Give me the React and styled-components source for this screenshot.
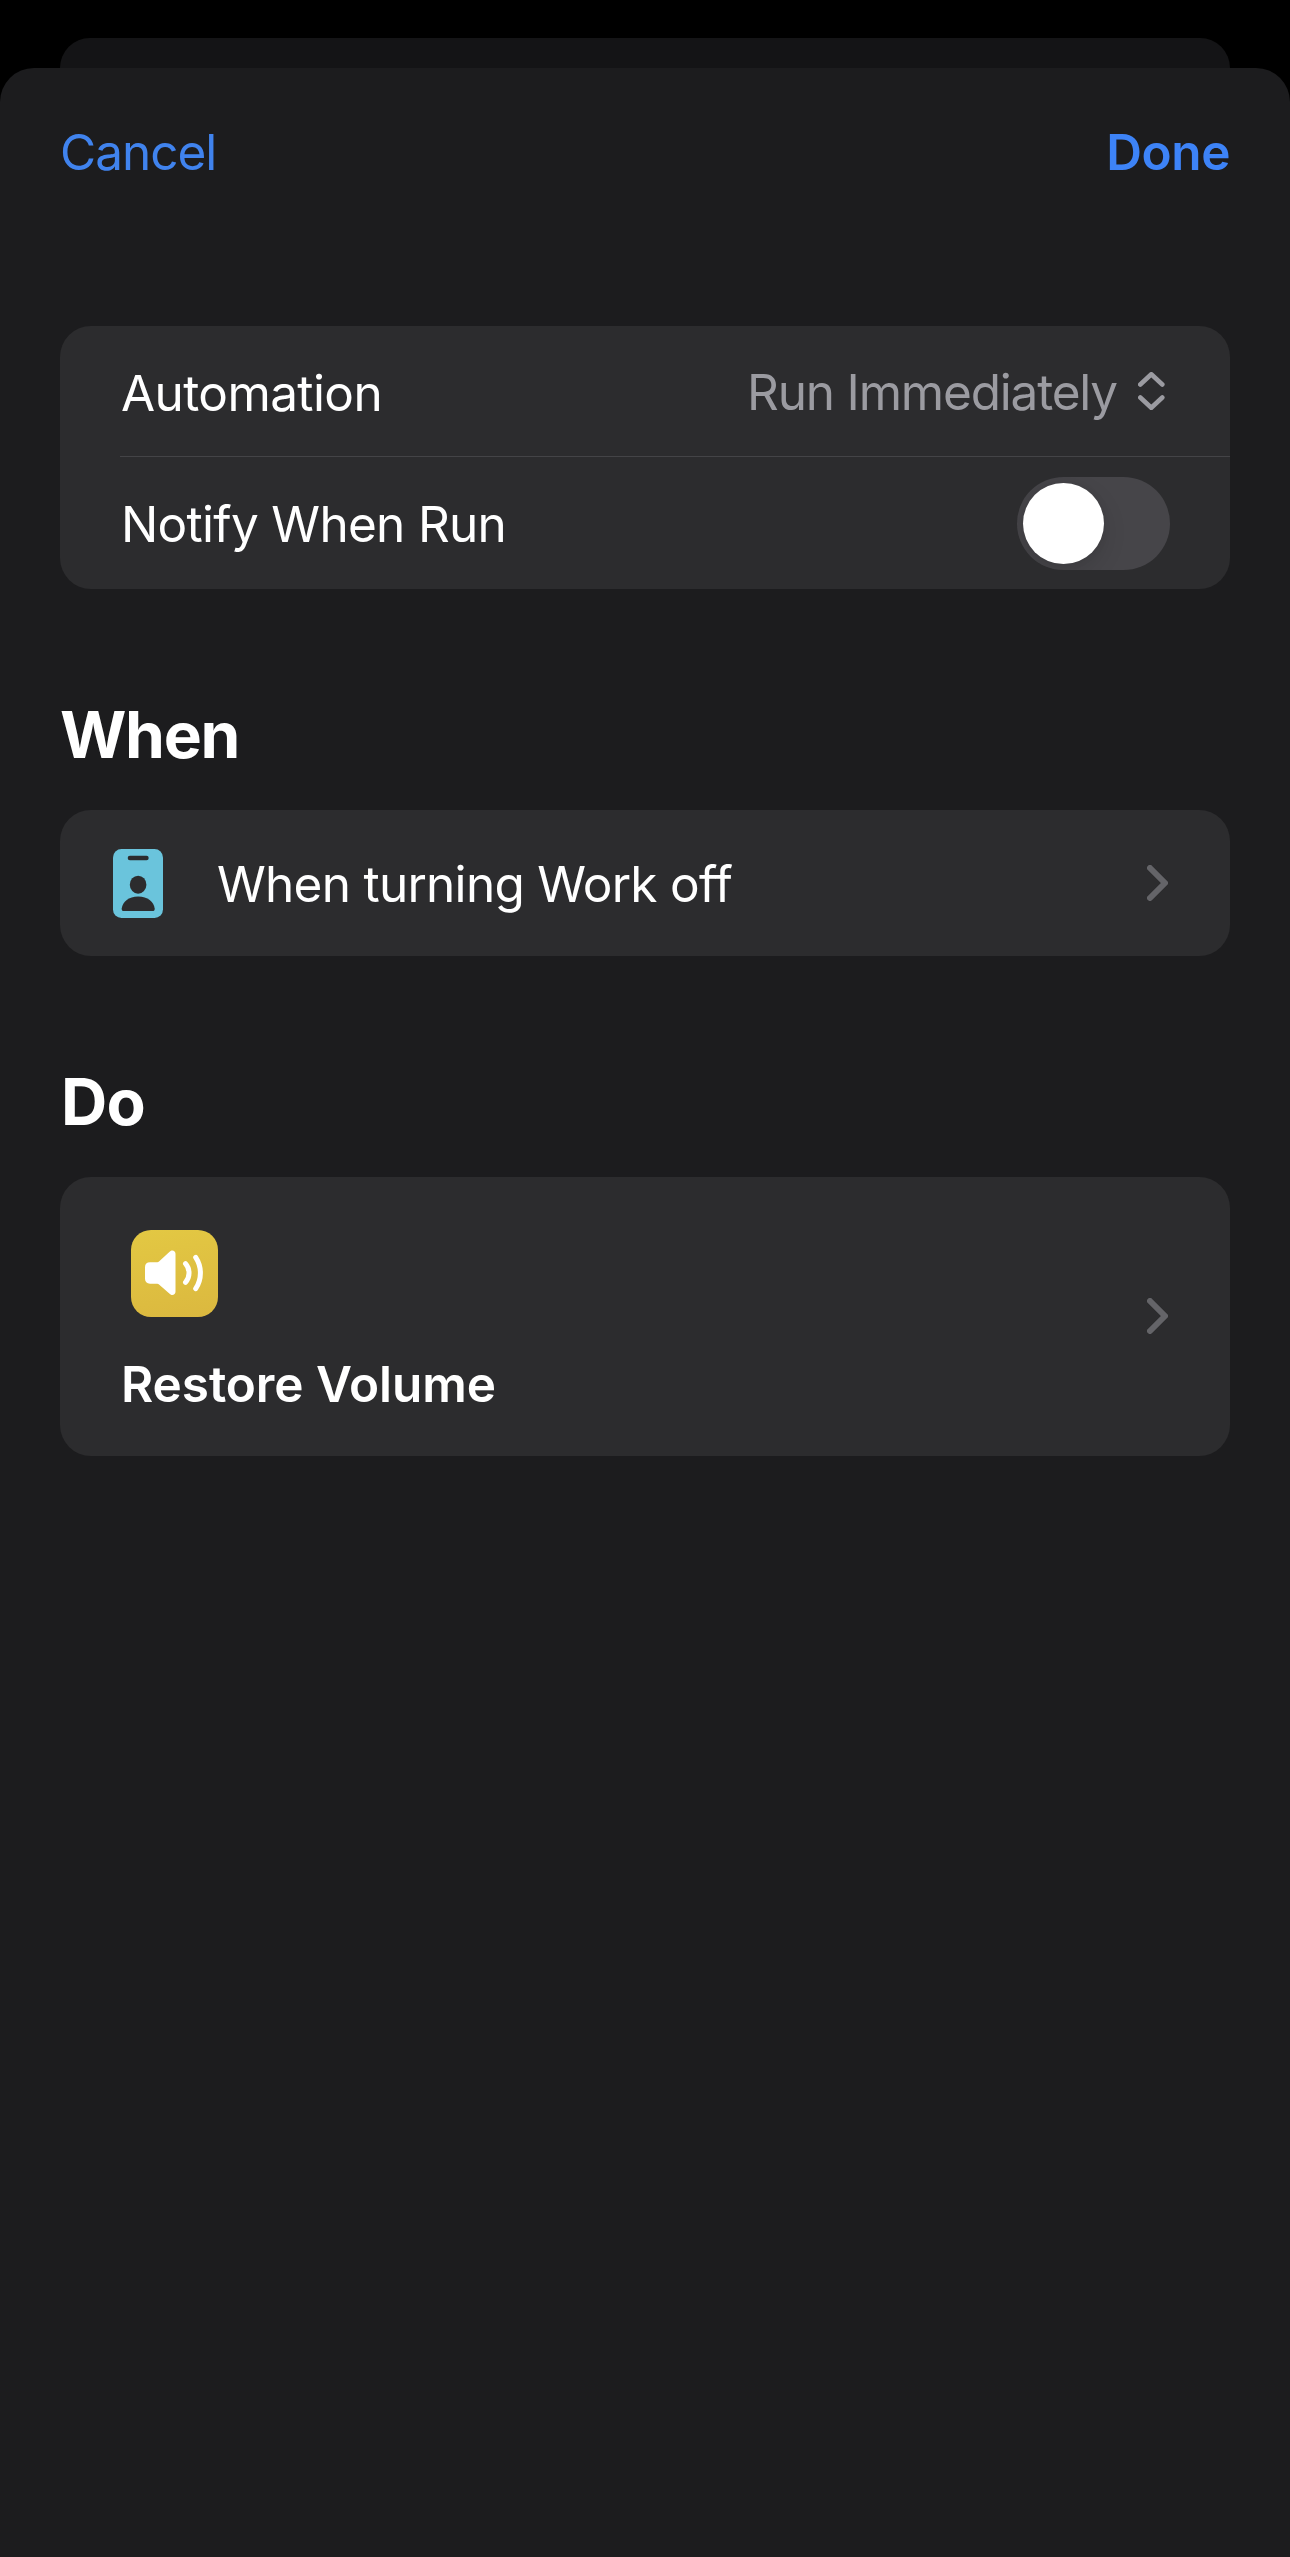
import React, { useState } from "react";
import styled, { createGlobalStyle } from "styled-components";

const GlobalStyle = createGlobalStyle`
  * { box-sizing: border-box; }
  body {
    margin: 0;
    background: #000;
    color: #fff;
    font-family: Inter, "Liberation Sans", sans-serif;
    font-size: 49.5px;
    line-height: 60px;
  }
`;

const Screen = styled.div`
  display: flex;
  flex-direction: column;
  width: 1290px;
  height: 2557px;
  padding-top: 38px;
  overflow: hidden;
  background: #000;
`;

const SheetBehind = styled.div`
  flex: none;
  height: 70px;
  margin: 0 60px -40px;
  border-radius: 30px 30px 0 0;
  background: #141416;
`;

const Sheet = styled.main`
  flex: 1;
  position: relative;
  border-radius: 34px 34px 0 0;
  background: #1c1c1e;
  padding: 0 60px;
`;

const NavBar = styled.header`
  display: flex;
  justify-content: space-between;
  align-items: flex-start;
  height: 258px;
  padding-top: 54px;
`;

const NavButton = styled.button`
  padding: 0;
  border: 0;
  background: none;
  color: ${(p) => (p.$strong ? "#3d83f7" : "#4083ee")};
  font: inherit;
  font-weight: ${(p) => (p.$strong ? 600 : 400)};
  letter-spacing: ${(p) => (p.$strong ? "-0.4px" : "-1px")};
`;

const SectionTitle = styled.h2`
  margin: 107px 0 37px;
  padding-left: ${(p) => p.$inset || 0}px;
  font-size: 64px;
  line-height: 77px;
  font-weight: 700;
  letter-spacing: ${(p) => p.$tracking}px;
`;

const Card = styled.section`
  border-radius: 31px;
  background: #2c2c2e;
`;

const SettingRow = styled.div`
  display: flex;
  align-items: center;
  justify-content: space-between;
  height: ${(p) => p.$height}px;
  padding: ${(p) => p.$top || 0}px ${(p) => p.$right}px 0 61px;
`;

const Divider = styled.div`
  height: 1px;
  margin-left: 60px;
  background: #444447;
`;

const Label = styled.span`
  padding-top: ${(p) => p.$drop}px;
  letter-spacing: ${(p) => p.$tracking}px;
  white-space: nowrap;
`;

const Picker = styled.div`
  display: flex;
  align-items: center;
  gap: 21px;
  color: #9b9ba1;
`;

const Switch = styled.button`
  display: flex;
  justify-content: ${(p) => (p.$on ? "flex-end" : "flex-start")};
  width: 153px;
  height: 93px;
  padding: 6px;
  border: 0;
  border-radius: 47px;
  overflow: hidden;
  background: ${(p) => (p.$on ? "#30d158" : "#464549")};
`;

const Knob = styled.span`
  width: 81px;
  height: 81px;
  border-radius: 50%;
  background: #fff;
  box-shadow: 0 9px 24px rgba(0, 0, 0, 0.12), 0 0 9px rgba(0, 0, 0, 0.06);
`;

const TriggerRow = styled.div`
  display: flex;
  align-items: center;
  height: 146px;
  padding: 0 62px 0 53px;
`;

const TriggerLabel = styled(Label)`
  flex: 1;
  margin-left: 54px;
`;

const ActionRow = styled.div`
  display: flex;
  align-items: center;
  justify-content: space-between;
  height: 279px;
  padding: 0 62px 1px 61px;
`;

const ActionBody = styled.div`
  display: flex;
  flex-direction: column;
  gap: 37px;
  height: 100%;
  padding-top: 53px;
  font-weight: 600;
`;

const AppTile = styled.div`
  width: 87px;
  height: 87px;
  margin-left: 10px;
  border-radius: 20px;
  background: linear-gradient(170deg, #e3c843, #dbb83f);
`;

const Glyph = styled.svg`
  display: block;
  flex: none;
`;

const Disclosure = () => (
  <Glyph width="21" height="36" viewBox="0 0 21 36" fill="none" stroke="#646468" strokeWidth="6" strokeLinecap="round" strokeLinejoin="round">
    <path d="M3 3L18 18L3 33" />
  </Glyph>
);

const UpDown = () => (
  <Glyph width="27" height="38" viewBox="0 0 27 38" fill="none" stroke="currentColor" strokeWidth="4.6" strokeLinecap="round" strokeLinejoin="round">
    <path d="M2.3 12.5L13.300 2.3L24.300 12.5M2.3 25.5L13.300 35.7L24.300 25.5" />
  </Glyph>
);

const Badge = () => (
  <Glyph width="50" height="70" viewBox="0 0 50 70">
    <rect y="1" width="50" height="69" rx="8.5" fill="#6ac4dc" />
    <g fill="#2c2c2e">
      <rect x="14.7" y="7.8" width="21" height="4.4" rx="2.2" />
      <ellipse cx="25.1" cy="36.7" rx="8.3" ry="9" />
      <path d="M11 63C9.300 63 8.500 62 8.700 60.400C9.700 54 15.600 48.600 25.200 48.600C34.800 48.600 40.700 54 41.700 60.400C41.900 62 41.100 63 39.400 63Z" />
    </g>
  </Glyph>
);

const Speaker = () => (
  <Glyph width="87" height="87" viewBox="0 0 87 87">
    <path
      d="M19 32.200H26.300C27 32.200 27.500 32 28 31.500L38.600 21.800C39.600 20.900 40.400 20.600 41.300 20.600C43.100 20.600 44.500 22 44.500 23.800V61.800C44.500 63.600 43.100 65 41.300 65C40.400 65 39.600 64.600 38.600 63.700L28 54.400C27.500 53.900 27 53.700 26.300 53.700H19C15.800 53.700 14 51.900 14 48.800V37.200C14 34 15.800 32.200 19 32.200Z"
      fill="#fff"
    />
    <path
      d="M54.500 33.700A14 14 0 0 1 54.500 52.300M64.700 27.300A28.500 28.500 0 0 1 64.700 58.700"
      fill="none"
      stroke="#fff"
      strokeWidth="5"
      strokeLinecap="round"
    />
  </Glyph>
);

export default function App() {
  const [notify, setNotify] = useState(false);

  return (
    <>
      <GlobalStyle />
      <Screen>
        <SheetBehind />
        <Sheet>
          <NavBar>
            <NavButton>Cancel</NavButton>
            <NavButton $strong>Done</NavButton>
          </NavBar>

          <Card>
            <SettingRow $height={130} $right={65}>
              <Label $drop={4} $tracking={-0.6}>Automation</Label>
              <Picker>
                <Label $drop={2} $tracking={-1.2}>Run Immediately</Label>
                <UpDown />
              </Picker>
            </SettingRow>
            <Divider />
            <SettingRow $height={132} $top={1} $right={60}>
              <Label $drop={1} $tracking={-0.7}>Notify When Run</Label>
              <Switch
                $on={notify}
                role="switch"
                aria-checked={notify}
                onClick={() => setNotify(!notify)}
              >
                <Knob />
              </Switch>
            </SettingRow>
          </Card>

          <SectionTitle $tracking={-1.3}>When</SectionTitle>
          <Card>
            <TriggerRow>
              <Badge />
              <TriggerLabel $drop={2} $tracking={-0.73}>When turning Work off</TriggerLabel>
              <Disclosure />
            </TriggerRow>
          </Card>

          <SectionTitle $tracking={-0.8} $inset={1}>Do</SectionTitle>
          <Card>
            <ActionRow>
              <ActionBody>
                <AppTile>
                  <Speaker />
                </AppTile>
                <Label $drop={0} $tracking={-0.08}>Restore Volume</Label>
              </ActionBody>
              <Disclosure />
            </ActionRow>
          </Card>
        </Sheet>
      </Screen>
    </>
  );
}
